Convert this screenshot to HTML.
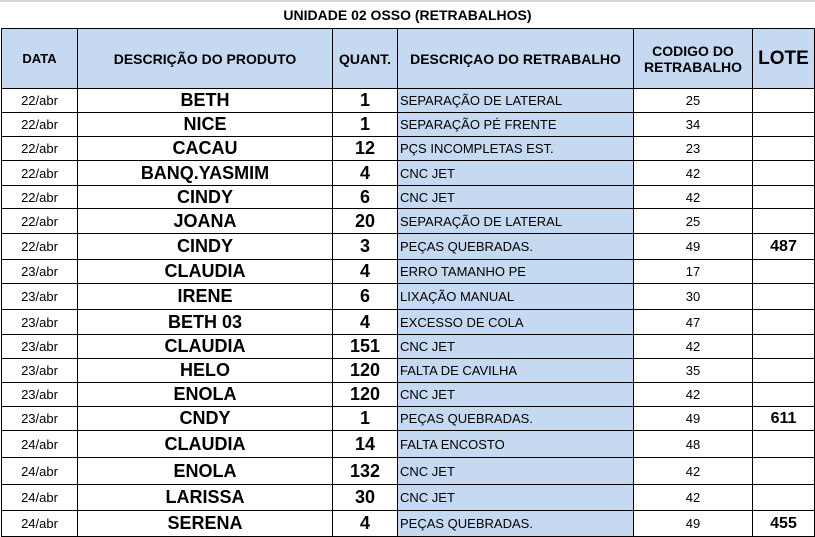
<!DOCTYPE html>
<html><head><meta charset="utf-8"><style>
body{margin:0;width:815px;height:537px;background:#fff;position:relative;overflow:hidden;font-family:"Liberation Sans",Arial,sans-serif;}
.topbar{position:absolute;left:0;top:0;width:815px;height:2px;background:#d4d4d4}
.title{position:absolute;left:0;top:2px;width:815px;height:26px;line-height:26px;text-align:center;font-weight:bold;font-size:14px;}
table{position:absolute;left:1px;top:28px;border-collapse:collapse;table-layout:fixed;}
td{border:1px solid #000;padding:0;text-align:center;white-space:nowrap;overflow:hidden;}
.h td{background:#c5d9f1;font-weight:bold;font-size:14px;height:59px;}
.d td.a{font-size:13px}
.d td.b{font-weight:bold;font-size:18px}
.d td.c{font-weight:bold;font-size:18px}
.d td.e{background:#c5d9f1;text-align:left;font-size:13px;padding-left:2px}
.d td.f{font-size:13px}
.d td.g{font-weight:bold;font-size:16px}
</style></head><body>
<div class="topbar"></div>
<div class="title">UNIDADE 02 OSSO (RETRABALHOS)</div>
<table>
<colgroup><col style="width:76px"><col style="width:255px"><col style="width:65px"><col style="width:236px"><col style="width:119px"><col style="width:62px"></colgroup>
<tr class="h"><td style="font-size:13px">DATA</td><td>DESCRIÇÃO DO PRODUTO</td><td>QUANT.</td><td>DESCRIÇAO DO RETRABALHO</td><td>CODIGO DO<br>RETRABALHO</td><td style="font-size:19px">LOTE</td></tr>
<tr class="d" style="height:24px"><td class="a">22/abr</td><td class="b">BETH</td><td class="c">1</td><td class="e">SEPARAÇÃO DE LATERAL</td><td class="f">25</td><td class="g"></td></tr>
<tr class="d" style="height:24px"><td class="a">22/abr</td><td class="b">NICE</td><td class="c">1</td><td class="e">SEPARAÇÃO PÉ FRENTE</td><td class="f">34</td><td class="g"></td></tr>
<tr class="d" style="height:24px"><td class="a">22/abr</td><td class="b">CACAU</td><td class="c">12</td><td class="e">PÇS INCOMPLETAS EST.</td><td class="f">23</td><td class="g"></td></tr>
<tr class="d" style="height:25px"><td class="a">22/abr</td><td class="b">BANQ.YASMIM</td><td class="c">4</td><td class="e">CNC JET</td><td class="f">42</td><td class="g"></td></tr>
<tr class="d" style="height:23px"><td class="a">22/abr</td><td class="b">CINDY</td><td class="c">6</td><td class="e">CNC JET</td><td class="f">42</td><td class="g"></td></tr>
<tr class="d" style="height:25px"><td class="a">22/abr</td><td class="b">JOANA</td><td class="c">20</td><td class="e">SEPARAÇÃO DE LATERAL</td><td class="f">25</td><td class="g"></td></tr>
<tr class="d" style="height:26px"><td class="a">22/abr</td><td class="b">CINDY</td><td class="c">3</td><td class="e">PEÇAS QUEBRADAS.</td><td class="f">49</td><td class="g">487</td></tr>
<tr class="d" style="height:24px"><td class="a">23/abr</td><td class="b">CLAUDIA</td><td class="c">4</td><td class="e">ERRO TAMANHO PE</td><td class="f">17</td><td class="g"></td></tr>
<tr class="d" style="height:26px"><td class="a">23/abr</td><td class="b">IRENE</td><td class="c">6</td><td class="e">LIXAÇÃO MANUAL</td><td class="f">30</td><td class="g"></td></tr>
<tr class="d" style="height:25px"><td class="a">23/abr</td><td class="b">BETH 03</td><td class="c">4</td><td class="e">EXCESSO DE COLA</td><td class="f">47</td><td class="g"></td></tr>
<tr class="d" style="height:24px"><td class="a">23/abr</td><td class="b">CLAUDIA</td><td class="c">151</td><td class="e">CNC JET</td><td class="f">42</td><td class="g"></td></tr>
<tr class="d" style="height:24px"><td class="a">23/abr</td><td class="b">HELO</td><td class="c">120</td><td class="e">FALTA DE CAVILHA</td><td class="f">35</td><td class="g"></td></tr>
<tr class="d" style="height:24px"><td class="a">23/abr</td><td class="b">ENOLA</td><td class="c">120</td><td class="e">CNC JET</td><td class="f">42</td><td class="g"></td></tr>
<tr class="d" style="height:24px"><td class="a">23/abr</td><td class="b">CNDY</td><td class="c">1</td><td class="e">PEÇAS QUEBRADAS.</td><td class="f">49</td><td class="g">611</td></tr>
<tr class="d" style="height:27px"><td class="a">24/abr</td><td class="b">CLAUDIA</td><td class="c">14</td><td class="e">FALTA ENCOSTO</td><td class="f">48</td><td class="g"></td></tr>
<tr class="d" style="height:27px"><td class="a">24/abr</td><td class="b">ENOLA</td><td class="c">132</td><td class="e">CNC JET</td><td class="f">42</td><td class="g"></td></tr>
<tr class="d" style="height:26px"><td class="a">24/abr</td><td class="b">LARISSA</td><td class="c">30</td><td class="e">CNC JET</td><td class="f">42</td><td class="g"></td></tr>
<tr class="d" style="height:26px"><td class="a">24/abr</td><td class="b">SERENA</td><td class="c">4</td><td class="e">PEÇAS QUEBRADAS.</td><td class="f">49</td><td class="g">455</td></tr>
</table>
</body></html>
